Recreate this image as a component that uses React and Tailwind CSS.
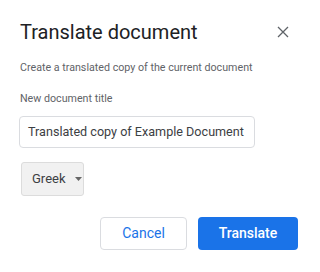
export default function App() {
  return (
    <div
      className="w-[320px] h-[272px] bg-white relative overflow-hidden"
      style={{ fontFamily: "Roboto, 'Liberation Sans', sans-serif" }}
    >
      <div className="flex items-center justify-between pl-5 pr-[29px] pt-[18px]">
        <h2 className="text-[20px] leading-[28px] text-[#202124]">Translate document</h2>
        <button className="w-4 h-4 flex items-center justify-center text-[#5f6368]">
          <svg width="12" height="12" viewBox="0 0 12 12" fill="none" stroke="currentColor" strokeWidth="1.3">
            <path d="M1 1 L11 11 M11 1 L1 11" />
          </svg>
        </button>
      </div>

      <p className="pl-5 mt-[15px] text-[10.7px] leading-[14px] text-[#5f6368] whitespace-nowrap">
        Create a translated copy of the current document
      </p>

      <label className="block pl-5 mt-[17px] text-[10.7px] leading-[14px] text-[#5f6368]">
        New document title
      </label>

      <div className="pl-[19px] mt-[10px]">
        <div className="w-[236px] h-[32px] border border-[#dadce0] rounded-[4px] flex items-center pl-[8px] text-[12.6px] text-[#3c4043] whitespace-nowrap overflow-hidden">
          Translated copy of Example Document
        </div>
      </div>

      <div className="pl-[21px] mt-[14px]">
        <button className="h-[34px] w-[63px] bg-[#f1f1f1] border border-[#dcdcdc] rounded-[3px] flex items-center pl-[10px] gap-[9px] text-[13px] text-[#3c4043]">
          Greek
          <svg width="7" height="4" viewBox="0 0 7 4">
            <path d="M0 0 L7 0 L3.5 4 Z" fill="#666" />
          </svg>
        </button>
      </div>

      <div className="flex justify-end gap-[11px] pr-[22px] mt-[21px]">
        <button className="w-[87px] h-[33px] border border-[#dadce0] rounded-[4px] text-[14px] text-[#1a73e8] bg-white">
          Cancel
        </button>
        <button className="w-[100px] h-[33px] rounded-[4px] text-[14px] font-medium text-white bg-[#1a73e8]">
          Translate
        </button>
      </div>
    </div>
  );
}
